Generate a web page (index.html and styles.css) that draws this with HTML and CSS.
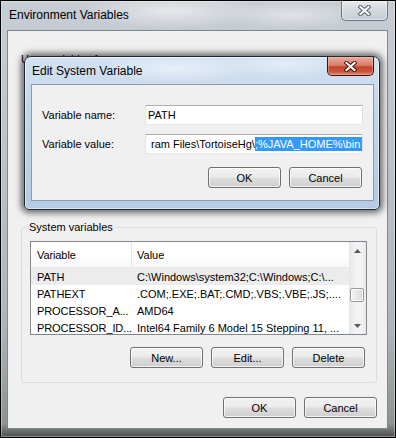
FILE: index.html
```html
<!DOCTYPE html>
<html>
<head>
<meta charset="utf-8">
<link rel="stylesheet" href="styles.css">
</head>
<body>
<div class="win">
  <div class="titlebar">
    <span class="title">Environment Variables</span>
    <div class="close inactive">
      <svg width="13" height="11" viewBox="0 0 13 11"><path d="M2.5 2 L10.5 9 M10.5 2 L2.5 9" stroke="#55606b" stroke-width="4.2" stroke-linecap="square"/><path d="M2.5 2 L10.5 9 M10.5 2 L2.5 9" stroke="#fff" stroke-width="2.2" stroke-linecap="square"/></svg>
    </div>
  </div>
  <div class="client">
    <fieldset class="group user">
      <legend>User variables for user</legend>
    </fieldset>
    <fieldset class="group sys">
      <legend>System variables</legend>
      <div class="lv">
        <div class="lv-main">
          <div class="lv-head">
            <div class="c1">Variable</div>
            <div class="c2">Value</div>
          </div>
          <div class="row sel"><div class="c1">PATH</div><div class="c2">C:\Windows\system32;C:\Windows;C:\...</div></div>
          <div class="row"><div class="c1">PATHEXT</div><div class="c2">.COM;.EXE;.BAT;.CMD;.VBS;.VBE;.JS;....</div></div>
          <div class="row"><div class="c1">PROCESSOR_A...</div><div class="c2">AMD64</div></div>
          <div class="row"><div class="c1">PROCESSOR_ID...</div><div class="c2">Intel64 Family 6 Model 15 Stepping 11, ...</div></div>
        </div>
        <div class="vscroll">
          <div class="arrow up"><svg width="7" height="4" viewBox="0 0 7 4"><path d="M0 4 L3.5 0 L7 4Z" fill="#5a5a5a"/></svg></div>
          <div class="gap"></div>
          <div class="thumb"></div>
          <div class="track"></div>
          <div class="arrow down"><svg width="7" height="4" viewBox="0 0 7 4"><path d="M0 0 L3.5 4 L7 0Z" fill="#5a5a5a"/></svg></div>
        </div>
      </div>
      <div class="btnrow inner">
        <button class="btn">New...</button>
        <button class="btn">Edit...</button>
        <button class="btn">Delete</button>
      </div>
    </fieldset>
    <div class="btnrow main">
      <button class="btn">OK</button>
      <button class="btn">Cancel</button>
    </div>
  </div>

  <div class="dlg">
    <div class="dlg-title">
      <span class="title">Edit System Variable</span>
      <div class="close red">
        <svg width="13" height="11" viewBox="0 0 13 11"><path d="M2.5 2 L10.5 9 M10.5 2 L2.5 9" stroke="#4a1208" stroke-width="4.2" stroke-linecap="square"/><path d="M2.5 2 L10.5 9 M10.5 2 L2.5 9" stroke="#fff" stroke-width="2.2" stroke-linecap="square"/></svg>
      </div>
    </div>
    <div class="dlg-client">
      <div class="form">
        <label class="lbl">Variable name:</label>
        <div class="input"><span class="txt">PATH</span></div>
        <label class="lbl">Variable value:</label>
        <div class="input val"><span class="txt">ram Files\TortoiseHg\</span><span class="caret"></span><span class="selected">;%JAVA_HOME%\bin</span></div>
      </div>
      <div class="btnrow dlgbtns">
        <button class="btn">OK</button>
        <button class="btn">Cancel</button>
      </div>
    </div>
  </div>
</div>
</body>
</html>
```

FILE: styles.css
```css
* { box-sizing: border-box; }
html, body { margin: 0; padding: 0; }
body {
  width: 396px;
  height: 438px;
  overflow: hidden;
  font-family: "Liberation Sans", Arial, sans-serif;
  font-size: 11px;
  color: #000;
  background: #000;
}
.win {
  position: relative;
  width: 396px;
  height: 438px;
  border: 1px solid #000;
  display: flex;
  flex-direction: column;
  background:
    radial-gradient(ellipse 90px 18px at 170px 10px, rgba(255,255,255,.55), rgba(255,255,255,0)),
    radial-gradient(ellipse 70px 14px at 290px 14px, rgba(255,255,255,.45), rgba(255,255,255,0)),
    linear-gradient(180deg, #c7cdd4 0%, #bcc3ca 35%, #adb4bb 75%, #8e948f 97%, #4a4e4c 100%);
  box-shadow: inset 0 0 0 1px rgba(255,255,255,.35);
}
.titlebar {
  height: 29px;
  display: flex;
  justify-content: space-between;
  padding-left: 8px;
}
.title {
  font-size: 12px;
  line-height: 29px;
}
.close {
  width: 47px;
  height: 20px;
  margin-right: 7px;
  display: flex;
  align-items: center;
  justify-content: center;
  border-radius: 0 0 5px 5px;
}
.close.inactive {
  border: 1px solid #6b747e;
  border-top: none;
  background: linear-gradient(180deg, rgba(255,255,255,.55), rgba(225,230,235,.45) 50%, rgba(200,207,214,.45));
  box-shadow: inset 0 0 0 1px rgba(255,255,255,.45);
}
.client {
  flex: 1;
  margin: 0 7px 8px 6px;
  background: #f0f0f0;
  border: 1px solid #7f8891;
  display: flex;
  flex-direction: column;
}
.group {
  margin: 0 10px 0 13px;
  border: 1px solid #d5dfe5;
  border-radius: 3px;
  min-width: 0;
}
.group legend {
  padding: 0 2px;
  margin-left: -3px;
  line-height: 14px;
}
.group.user {
  margin-top: 21px;
  height: 155px;
  padding: 0;
}
.group.sys {
  margin-top: 13px;
  padding: 7px 9px 14px 8px;
}
.lv {
  width: 337px;
  height: 94px;
  border: 1px solid #828790;
  background: #fff;
  display: flex;
}
.lv-main {
  flex: 1;
  min-width: 0;
  display: flex;
  flex-direction: column;
  overflow: hidden;
}
.lv-head {
  height: 26px;
  flex: none;
  display: flex;
  align-items: center;
  background: linear-gradient(180deg, #ffffff 0%, #ffffff 55%, #f6f7f9 100%);
  border-bottom: 1px solid #e6e8ec;
}
.lv-head .c1 {
  height: 100%;
  display: flex;
  align-items: center;
  border-right: 1px solid #e3e5e9;
}
.c1 {
  width: 101px;
  flex: none;
  padding-left: 6px;
  white-space: nowrap;
  letter-spacing: -0.1px;
}
.c2 {
  padding-left: 5px;
  white-space: nowrap;
  overflow: hidden;
}
.row {
  height: 17px;
  flex: none;
  display: flex;
  align-items: center;
}
.row.sel { background: #ececec; }
.vscroll {
  width: 17px;
  flex: none;
  display: flex;
  flex-direction: column;
  background: linear-gradient(90deg, #e6e6e6, #f3f3f3 40%, #f3f3f3 70%, #e9e9e9);
}
.arrow {
  height: 17px;
  display: flex;
  align-items: center;
  justify-content: center;
}
.gap { height: 29px; }
.thumb {
  height: 14px;
  margin: 0 2px 0 1px;
  border: 1px solid #9a9a9a;
  border-radius: 2px;
  background: linear-gradient(90deg, #f4f4f4, #e8e8e8 50%, #d6d6d6);
  box-shadow: inset 0 0 0 1px rgba(255,255,255,.8);
}
.track { flex: 1; }
.btnrow {
  display: flex;
  justify-content: flex-end;
  gap: 8px;
}
.btnrow.inner {
  margin-top: 12px;
  padding-right: 2px;
}
.btnrow.main {
  margin-top: 14px;
  padding-right: 10px;
}
.btn {
  width: 73px;
  height: 21px;
  padding: 0;
  border: 1px solid #707070;
  border-radius: 3px;
  background: linear-gradient(180deg, #f2f2f2 0%, #ebebeb 48%, #dddddd 52%, #cfcfcf 100%);
  box-shadow: inset 0 0 0 1px rgba(255,255,255,.75);
  font-family: "Liberation Sans", Arial, sans-serif;
  font-size: 11px;
  color: #000;
}
.dlg {
  position: absolute;
  left: 23px;
  top: 55px;
  width: 356px;
  height: 154px;
  border: 1px solid #1d2833;
  border-radius: 7px 7px 5px 5px;
  display: flex;
  flex-direction: column;
  background:
    radial-gradient(ellipse 80px 14px at 150px 12px, rgba(255,255,255,.5), rgba(255,255,255,0)),
    radial-gradient(ellipse 60px 12px at 260px 8px, rgba(255,255,255,.4), rgba(255,255,255,0)),
    linear-gradient(180deg, #d3e2f2 0%, #c2d6eb 35%, #b5cbe3 100%);
  box-shadow: 0 0 6px 3px rgba(0,0,0,.55), inset 0 0 0 1px rgba(255,255,255,.5);
}
.dlg-title {
  height: 27px;
  display: flex;
  justify-content: space-between;
  padding-left: 7px;
}
.dlg-title .title { line-height: 28px; }
.close.red {
  height: 19px;
  margin-right: 5px;
  border: 1px solid #3d0f07;
  border-top: none;
  background: linear-gradient(180deg, #e9ab9c 0%, #d9806c 45%, #c2452c 55%, #c9553a 80%, #e1876f 100%);
  box-shadow: inset 0 0 0 1px rgba(255,220,210,.35);
}
.dlg-client {
  flex: 1;
  margin: 0 5px 8px 6px;
  background: #f0f0f0;
  border: 1px solid #8a9bae;
  padding: 20px 10px 12px 10px;
  display: flex;
  flex-direction: column;
}
.form {
  display: grid;
  grid-template-columns: 103px 1fr;
  row-gap: 9px;
  align-items: center;
}
.input {
  height: 20px;
  background: #fff;
  border: 1px solid;
  border-color: #abadb3 #dbdfe6 #e3e9ef #e2e3ea;
  display: flex;
  align-items: center;
  padding-left: 2px;
  white-space: nowrap;
  overflow: hidden;
}
.input.val { padding-left: 5px; }
.caret {
  width: 1px;
  height: 14px;
  background: #000;
}
.selected {
  background: #3399ff;
  color: #fff;
  line-height: 14px;
  padding-right: 2px;
}
.btnrow.dlgbtns {
  margin-top: 13px;
  padding-right: 1px;
}
```
